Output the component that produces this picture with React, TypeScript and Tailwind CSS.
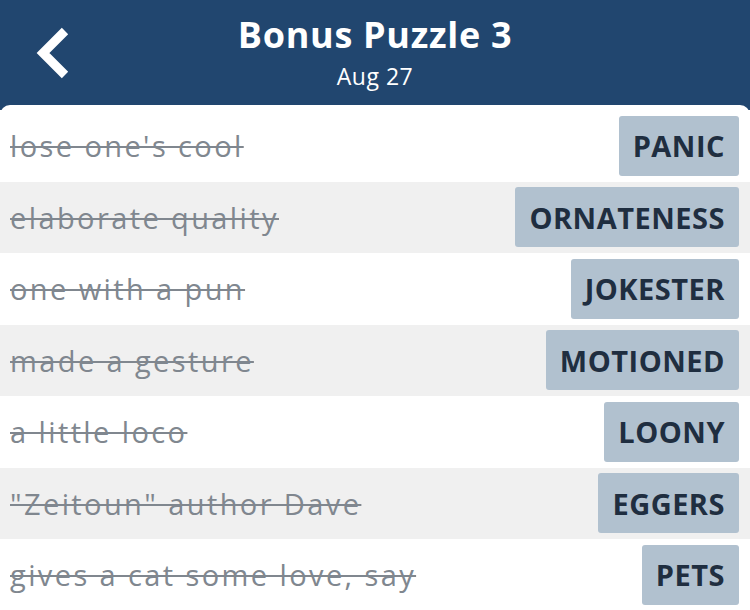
const ROWS = [
  { clue: "lose one's cool", answer: "PANIC" },
  { clue: "elaborate quality", answer: "ORNATENESS" },
  { clue: "one with a pun", answer: "JOKESTER" },
  { clue: "made a gesture", answer: "MOTIONED" },
  { clue: "a little loco", answer: "LOONY" },
  { clue: "\"Zeitoun\" author Dave", answer: "EGGERS" },
  { clue: "gives a cat some love, say", answer: "PETS" },
];

export default function App() {
  return (
    <div className="w-[750px] h-[610px] overflow-hidden bg-[#21466f] font-['Open_Sans',sans-serif]">
      {/* Header */}
      <div className="relative h-[105px] flex flex-col items-center text-white">
        <svg className="absolute left-[33px] top-[27px]" width="40" height="52" viewBox="0 0 40 52">
          <path d="M32 4 L10 26 L32 48" fill="none" stroke="white" strokeWidth="9" />
        </svg>
        <div className="mt-[11px] text-[36px] leading-[48px] font-bold tracking-[0.7px]">Bonus Puzzle 3</div>
        <div className="text-[23px] leading-[30px] mt-[2px] tracking-[0.5px]">Aug 27</div>
      </div>

      {/* List */}
      <div className="bg-white rounded-t-[10px] pt-[5px] h-[505px]">
        {ROWS.map((row, i) => (
          <div
            key={row.answer}
            className={`h-[71.5px] flex items-center justify-between pl-[10px] pr-[11px] ${
              i % 2 === 1 ? "bg-[#f0f0f0]" : "bg-white"
            }`}
          >
            <span className="text-[29px] text-[#80878f] line-through decoration-[2px] tracking-[2.4px] whitespace-nowrap">
              {row.clue}
            </span>
            <span className="h-[60px] flex items-center px-[14px] rounded-[3px] bg-[#b1c1cf] text-[#1f2e40] text-[29px] font-bold tracking-[0.5px]">
              {row.answer}
            </span>
          </div>
        ))}
      </div>
    </div>
  );
}
